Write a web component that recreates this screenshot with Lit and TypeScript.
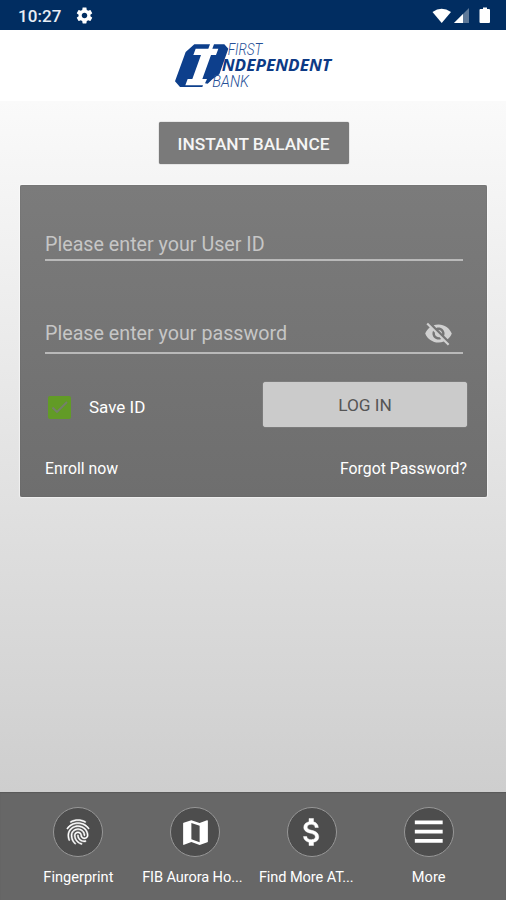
import { LitElement, html, css, svg } from "lit";
import { customElement, property } from "lit/decorators.js";

const ICONS: Record<string, string> = {
  settings:
    "M19.43 12.98c.04-.32.07-.64.07-.98s-.03-.66-.07-.98l2.11-1.65c.19-.15.24-.42.12-.64l-2-3.46c-.12-.22-.39-.3-.61-.22l-2.49 1c-.52-.4-1.08-.73-1.69-.98l-.38-2.65C14.46 2.18 14.25 2 14 2h-4c-.25 0-.46.18-.49.42l-.38 2.65c-.61.25-1.17.59-1.69.98l-2.49-1c-.23-.09-.49 0-.61.22l-2 3.46c-.13.22-.07.49.12.64l2.11 1.65c-.04.32-.07.65-.07.98s.03.66.07.98l-2.11 1.65c-.19.15-.24.42-.12.64l2 3.46c.12.22.39.3.61.22l2.49-1c.52.4 1.08.73 1.69.98l.38 2.65c.03.24.24.42.49.42h4c.25 0 .46-.18.49-.42l.38-2.65c.61-.25 1.17-.59 1.69-.98l2.49 1c.23.09.49 0 .61-.22l2-3.46c.12-.22.07-.49-.12-.64l-2.11-1.65zM12 15.5c-1.93 0-3.5-1.57-3.5-3.5s1.57-3.5 3.5-3.5 3.5 1.57 3.5 3.5-1.57 3.5-3.5 3.5z",
  hidden:
    "M12 7c2.76 0 5 2.24 5 5 0 .65-.13 1.26-.36 1.83l2.92 2.92c1.51-1.26 2.7-2.89 3.43-4.75-1.73-4.39-6-7.5-11-7.5-1.4 0-2.74.25-3.98.7l2.16 2.16C10.74 7.13 11.35 7 12 7zM2 4.27l2.28 2.28.46.46C3.08 8.3 1.78 10.02 1 12c1.73 4.39 6 7.5 11 7.5 1.55 0 3.03-.3 4.38-.84l.42.42L19.73 22 21 20.73 3.27 3 2 4.27zM7.53 9.8l1.55 1.55c-.05.21-.08.43-.08.65 0 1.66 1.34 3 3 3 .22 0 .44-.03.65-.08l1.55 1.55c-.67.33-1.41.53-2.2.53-2.76 0-5-2.24-5-5 0-.79.2-1.53.53-2.2zm4.31-.78l3.15 3.15.02-.16c0-1.66-1.34-3-3-3l-.17.01z",
  fingerprint:
    "M17.81 4.47c-.08 0-.16-.02-.23-.06C15.66 3.42 14 3 12.01 3c-1.98 0-3.86.47-5.57 1.41-.24.13-.54.04-.68-.2-.13-.24-.04-.55.2-.68C7.82 2.52 9.86 2 12.01 2c2.13 0 3.99.47 6.03 1.52.25.13.34.43.21.67-.09.18-.26.28-.44.28zM3.5 9.72c-.1 0-.2-.03-.29-.09-.23-.16-.28-.47-.12-.7.99-1.4 2.25-2.5 3.75-3.27C9.98 4.04 14 4.03 17.15 5.65c1.5.77 2.76 1.86 3.75 3.25.16.22.11.54-.12.7-.23.16-.54.11-.7-.12-.9-1.26-2.04-2.25-3.39-2.94-2.87-1.47-6.54-1.47-9.4.01-1.36.7-2.5 1.7-3.4 2.96-.08.14-.23.21-.39.21zm6.25 12.07c-.13 0-.26-.05-.35-.15-.87-.87-1.34-1.43-2.01-2.64-.69-1.23-1.05-2.73-1.05-4.34 0-2.97 2.54-5.39 5.66-5.39s5.66 2.42 5.66 5.39c0 .28-.22.5-.5.5s-.5-.22-.5-.5c0-2.42-2.09-4.39-4.66-4.39-2.57 0-4.66 1.97-4.66 4.39 0 1.44.32 2.77.93 3.85.64 1.15 1.08 1.64 1.85 2.42.19.2.19.51 0 .71-.11.1-.24.15-.37.15zm7.17-1.85c-1.19 0-2.24-.3-3.1-.89-1.49-1.01-2.38-2.65-2.38-4.39 0-.28.22-.5.5-.5s.5.22.5.5c0 1.41.72 2.74 1.94 3.56.71.48 1.54.71 2.54.71.24 0 .64-.03 1.04-.1.27-.05.53.13.58.41.05.27-.13.53-.41.58-.57.11-1.07.12-1.21.12zM14.91 22c-.04 0-.09-.01-.13-.02-1.59-.44-2.63-1.03-3.72-2.1-1.4-1.39-2.17-3.24-2.17-5.22 0-1.62 1.38-2.94 3.08-2.94 1.7 0 3.08 1.32 3.08 2.94 0 1.07.93 1.94 2.08 1.94s2.08-.87 2.08-1.94c0-3.77-3.25-6.83-7.25-6.83-2.84 0-5.44 1.58-6.61 4.03-.39.81-.59 1.76-.59 2.8 0 .78.07 2.01.67 3.61.1.26-.03.55-.29.64-.26.1-.55-.04-.64-.29-.49-1.31-.73-2.61-.73-3.96 0-1.2.23-2.29.68-3.24 1.33-2.79 4.28-4.6 7.51-4.6 4.55 0 8.25 3.51 8.25 7.83 0 1.62-1.38 2.94-3.08 2.94s-3.08-1.32-3.08-2.94c0-1.07-.93-1.94-2.08-1.94s-2.08.87-2.08 1.94c0 1.71.66 3.31 1.87 4.51.95.94 1.86 1.46 3.27 1.85.27.07.42.35.35.61-.05.23-.26.38-.47.38z",
  map: "M20.5 3l-.16.03L15 5.1 9 3 3.36 4.9c-.21.07-.36.25-.36.48V20.5c0 .28.22.5.5.5l.16-.03L9 18.9l6 2.1 5.64-1.9c.21-.07.36-.25.36-.48V3.5c0-.28-.22-.5-.5-.5zM15 19l-6-2.11V5l6 2.11V19z",
  money:
    "M11.8 10.9c-2.27-.59-3-1.2-3-2.15 0-1.09 1.01-1.85 2.7-1.85 1.78 0 2.44.85 2.5 2.1h2.21c-.07-1.72-1.12-3.3-3.21-3.81V3h-3v2.16c-1.94.42-3.5 1.68-3.5 3.61 0 2.31 1.91 3.46 4.7 4.13 2.5.6 3 1.48 3 2.41 0 .69-.49 1.79-2.7 1.79-2.06 0-2.87-.92-2.98-2.1h-2.2c.12 2.19 1.76 3.42 3.68 3.83V21h3v-2.15c1.95-.37 3.5-1.5 3.5-3.55 0-2.84-2.43-3.81-4.7-4.4z",
  menu: "M4 18h16.300v-2.200H4v2.200zm0-5.400h16.300v-2.200H4v2.200zm0-7.600v2.200h16.300V5H4z",
};

@customElement("ui-icon")
class UiIcon extends LitElement {
  @property() name = "";
  static styles = css`
    :host { display: block; width: 24px; height: 24px; flex: none; }
    .glyph { display: block; width: 100%; height: 100%; fill: currentColor; stroke: currentColor; stroke-width: var(--weight, 0); }
  `;
  render() {
    return html`<svg class="glyph" viewBox="0 0 24 24">${svg`<path d=${ICONS[this.name] ?? ""}></path>`}</svg>`;
  }
}

@customElement("bank-logo")
class BankLogo extends LitElement {
  static styles = css`
    :host { display: block; width: 180px; height: 65px; }
    .mark { display: block; width: 100%; height: 100%; }
    .blue { fill: #0d3f8c; }
    .thin { font: italic 300 48px "Roboto", sans-serif; fill: #264f97; }
    .bold { font: italic 700 47px "Open Sans", sans-serif; fill: #0d3a85; }
  `;
  render() {
    return html`<svg class="mark" viewBox="0 0 540 195">
      <path class="blue" d="M88 37H135L130 50H92L85 69H108L82 141H68L61 160H114L112 165H45L30 148L62 60Z"></path>
      <path class="blue" d="M147 37H178L190 50L163 127L142 142L128 155L120 154L126 141H112L138 69H153L160 50H142Z"></path>
      <text class="thin" x="188" y="70" textLength="104" lengthAdjust="spacingAndGlyphs">FIRST</text>
      <text class="bold" x="170" y="116" textLength="328" lengthAdjust="spacingAndGlyphs">NDEPENDENT</text>
      <text class="thin" x="142" y="164" textLength="110" lengthAdjust="spacingAndGlyphs">BANK</text>
    </svg>`;
  }
}

@customElement("app-root")
class AppRoot extends LitElement {
  static styles = css`
    :host {
      display: flex; flex-direction: column; width: 506px; height: 900px; overflow: hidden;
      font-family: "Roboto", sans-serif; color: #fff;
      background: linear-gradient(#fafafa 101px, #cecece 792px);
    }
    .status {
      height: 30px; flex: none; box-sizing: border-box; background: #012d61;
      display: flex; align-items: center; padding: 1px 15px 0 18px;
    }
    .time { font: 500 17px/28px "Roboto", sans-serif; letter-spacing: 0.1px; color: #e8edf5; }
    .gear { width: 19px; height: 19px; margin-left: 13px; }
    .signals { margin-left: auto; width: 60px; height: 20px; display: block; }
    .brand { height: 71px; flex: none; background: #fff; display: flex; }
    .logo { margin: 2px 0 0 165px; }
    .instant {
      align-self: center; flex: none; width: 190px; height: 42px; margin: 21px 0 0 1px;
      border: 0; border-radius: 2px; background: #7a7a7a; color: #f5f5f5; padding: 0;
      font: 500 17.3px/44px "Roboto", sans-serif; box-shadow: 0 0 1px #555;
    }
    .panel {
      flex: none; box-sizing: border-box; width: 467px; height: 312px; margin: 21px 0 0 20px;
      padding: 35px 20px 0 25px; border-radius: 2px;
      background: linear-gradient(#7b7b7b, #6e6e6e); box-shadow: 0 0 1px 1px rgba(255, 255, 255, 0.5), inset 0 0 1px #555;
    }
    .field {
      display: flex; justify-content: space-between; align-items: center; width: 418px; height: 41px;
      border-bottom: 2px solid #b9b9b9; box-sizing: border-box; padding-top: 9px;
      font-size: 19.7px; color: #c6c6c6;
    }
    .field + .field { margin-top: 51px; height: 42px; padding-top: 2px; }
    .eye { width: 29px; height: 29px; margin-right: 10px; color: #d0d0d0; }
    .row { display: flex; align-items: center; justify-content: space-between; }
    .actions { margin-top: 28px; height: 45px; }
    .save { display: flex; align-items: center; font-size: 17px; padding: 5px 0 0 3px; }
    .box { width: 23px; height: 23px; margin-right: 18px; border-radius: 2px; background: #629b26; }
    .tick { display: block; fill: none; stroke: #767f6d; stroke-width: 1.8; }
    .login {
      width: 204px; height: 45px; border: 0; padding: 0; border-radius: 3px; background: #cbcbcb;
      color: #555; font: 400 17.3px/46px "Roboto", sans-serif; box-shadow: 0 0 1px #ddd;
    }
    .links { margin-top: 30px; height: 22px; font-size: 15.8px; }
    .tabs {
      margin-top: auto; flex: none; box-sizing: border-box; height: 108px; padding: 15px 19px 0 20px;
      display: grid; grid-template-columns: repeat(4, 1fr);
      background: #676767; box-shadow: inset 0 1px 1px #595959;
    }
    .tab { display: flex; flex-direction: column; align-items: center; min-width: 0; }
    .disc {
      width: 50px; height: 50px; box-sizing: border-box; border: 1.5px solid #979797; border-radius: 50%;
      background: #4d4d4d; display: flex; align-items: center; justify-content: center;
    }
    .pic { width: 30px; height: 30px; }
    .pic.fingerprint { --weight: 0.35; }
    .pic.menu { width: 41px; height: 41px; }
    .pic.money { width: 36px; height: 36px; --weight: 0.3; }
    .pic.map { width: 33px; height: 33px; }
    .label { width: 106px; margin-top: 11px; font-size: 14.6px; line-height: 18px; white-space: nowrap; text-align: center; }
    .label.clipped { text-align: left; letter-spacing: -0.1px; }
  `;

  private tabs = [
    ["fingerprint", "Fingerprint"],
    ["map", "FIB Aurora Ho..."],
    ["money", "Find More AT..."],
    ["menu", "More"],
  ];

  render() {
    return html`
      <div class="status">
        <span class="time">10:27</span>
        <ui-icon class="gear" name="settings"></ui-icon>
        <svg class="signals" viewBox="0 0 60 20">
          <path fill="#fff" d="M1.500 6Q10.500 -.5 20 6L10.700 17Z"></path>
          <path fill="#5d7898" d="M38 2V17H23Z"></path>
          <path fill="#fff" d="M32 8V17H23Z"></path>
          <path fill="#fff" d="M50 3H52V1.500H56V3H58Q59 3 59 4V16Q59 17 58 17H49.500Q48.500 17 48.500 16V4Q48.500 3 49.500 3Z"></path>
        </svg>
      </div>
      <div class="brand"><bank-logo class="logo"></bank-logo></div>
      <button class="instant">INSTANT BALANCE</button>
      <div class="panel">
        <div class="field"><span>Please enter your User ID</span></div>
        <div class="field">
          <span>Please enter your password</span>
          <ui-icon class="eye" name="hidden"></ui-icon>
        </div>
        <div class="row actions">
          <div class="save">
            <span class="box"><svg class="tick" width="23" height="23" viewBox="0 0 23 23"><path d="M4.500 11.500L9 16L19 6"></path></svg></span>
            <span>Save ID</span>
          </div>
          <button class="login">LOG IN</button>
        </div>
        <div class="row links"><span>Enroll now</span><span>Forgot Password?</span></div>
      </div>
      <div class="tabs">
        ${this.tabs.map(
          ([icon, text]) => html`<div class="tab">
            <div class="disc"><ui-icon class="pic ${icon}" name=${icon}></ui-icon></div>
            <span class="label ${text.endsWith("...") ? "clipped" : ""}">${text}</span>
          </div>`,
        )}
      </div>
    `;
  }
}
